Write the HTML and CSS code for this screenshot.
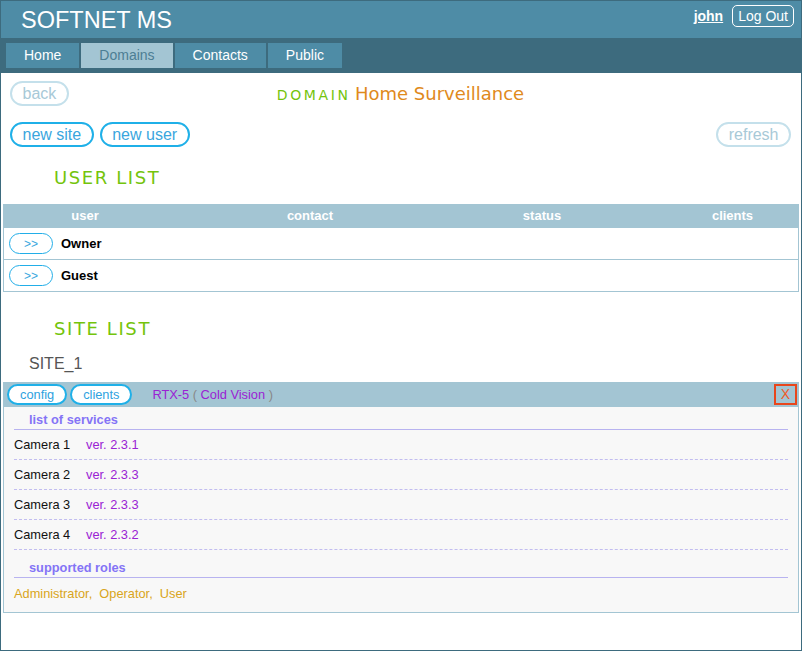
FILE: index.html
```html
<!DOCTYPE html>
<html lang="en">
<head>
<meta charset="utf-8">
<title>SOFTNET MS</title>
<link rel="stylesheet" href="styles.css">
</head>
<body>
<div class="page">
  <header class="topbar">
    <div class="brand">SOFTNET MS</div>
    <div class="account">
      <a class="user-link" href="#">john</a>
      <button class="logout">Log Out</button>
    </div>
  </header>
  <nav class="tabs">
    <div class="tab">Home</div>
    <div class="tab active">Domains</div>
    <div class="tab">Contacts</div>
    <div class="tab">Public</div>
  </nav>
  <main class="content">
    <div class="title-row">
      <div class="title-left"><button class="pill disabled">back</button></div>
      <div class="domain-title"><span class="domain-label">DOMAIN</span> <span class="domain-name">Home Surveillance</span></div>
      <div class="title-right"></div>
    </div>
    <div class="action-row">
      <div class="action-group">
        <button class="pill">new site</button>
        <button class="pill">new user</button>
      </div>
      <button class="pill disabled">refresh</button>
    </div>

    <h2 class="section-title">USER LIST</h2>
    <div class="user-table">
      <div class="user-head">
        <div class="col">user</div>
        <div class="col">contact</div>
        <div class="col">status</div>
        <div class="col col-clients">clients</div>
      </div>
      <div class="user-row">
        <button class="open-btn">&gt;&gt;</button><span class="user-name">Owner</span>
      </div>
      <div class="user-row">
        <button class="open-btn">&gt;&gt;</button><span class="user-name">Guest</span>
      </div>
    </div>

    <h2 class="section-title site-list-title">SITE LIST</h2>
    <div class="site-name">SITE_1</div>
    <div class="site-box">
      <div class="site-head">
        <button class="mini-btn">config</button>
        <button class="mini-btn">clients</button>
        <span class="device"><span class="purple">RTX-5</span> <span class="paren">(</span> <span class="purple">Cold Vision</span> <span class="paren">)</span></span>
        <button class="close-btn">X</button>
      </div>
      <div class="site-body">
        <div class="sub-head">list of services</div>
        <div class="service"><span class="service-name">Camera 1</span><span class="purple">ver. 2.3.1</span></div>
        <div class="service"><span class="service-name">Camera 2</span><span class="purple">ver. 2.3.3</span></div>
        <div class="service"><span class="service-name">Camera 3</span><span class="purple">ver. 2.3.3</span></div>
        <div class="service"><span class="service-name">Camera 4</span><span class="purple">ver. 2.3.2</span></div>
        <div class="sub-head roles-head">supported roles</div>
        <div class="roles">Administrator,&nbsp; Operator,&nbsp; User</div>
      </div>
    </div>
  </main>
</div>
</body>
</html>
```

FILE: styles.css
```css
* { box-sizing: border-box; }
html, body { margin: 0; padding: 0; background: #fff; }
body { font-family: "Liberation Sans", Arial, sans-serif; }

.page {
  width: 802px;
  height: 651px;
  border: 1px solid #3d6b7e;
  display: flex;
  flex-direction: column;
  overflow: hidden;
  background: #fff;
}

/* top bar */
.topbar {
  height: 37px;
  flex: none;
  background: #4e8ca6;
  display: flex;
  justify-content: space-between;
  align-items: flex-start;
  padding: 0 7px 0 20px;
}
.brand {
  font-size: 23.5px;
  line-height: 26px;
  color: #fff;
  margin-top: 6px;
}
.account {
  display: flex;
  align-items: baseline;
  gap: 9px;
  margin-top: 4px;
}
.user-link {
  color: #fff;
  font-weight: bold;
  font-size: 14px;
  text-decoration: underline;
}
.logout {
  height: 22px;
  border: 1px solid #fff;
  border-radius: 5px;
  background: transparent;
  color: #fff;
  font-family: "Liberation Sans", Arial, sans-serif;
  font-size: 14px;
  line-height: 20px;
  padding: 0 5px;
}

/* tabs */
.tabs {
  height: 35px;
  flex: none;
  background: #3d6b7e;
  display: flex;
  gap: 2px;
  padding: 5px 0 5px 5px;
}
.tab {
  height: 25px;
  line-height: 25px;
  padding: 0 18px;
  background: #4e8ca6;
  color: #fff;
  font-size: 14px;
}
.tab.active {
  background: #a3c5d3;
  color: #4c7e94;
}

/* content */
.content { flex: 1; }

.title-row {
  display: grid;
  grid-template-columns: 1fr auto 1fr;
  align-items: center;
  margin-top: 8px;
  padding: 0 10px 0 9px;
}
.domain-title { white-space: nowrap; }
.domain-label {
  font-family: "DejaVu Sans", Verdana, sans-serif;
  font-size: 14px;
  letter-spacing: 2.6px;
  color: #74c40c;
}
.domain-name {
  font-family: "DejaVu Sans", Verdana, sans-serif;
  font-size: 18px;
  color: #e08a1c;
}

.pill {
  height: 25px;
  border: 2px solid #1fb0e8;
  border-radius: 13px;
  background: #fff;
  color: #3aa6de;
  font-family: "Liberation Sans", Arial, sans-serif;
  font-size: 16px;
  line-height: 21px;
  padding: 0 10.5px;
}
.pill.disabled {
  border-color: #c4e0eb;
  color: #a8c9d7;
}

.action-row {
  display: flex;
  justify-content: space-between;
  margin-top: 16px;
  padding: 0 10px 0 9px;
}
.action-group { display: flex; gap: 6px; }

.section-title {
  font-family: "DejaVu Sans", Verdana, sans-serif;
  font-weight: normal;
  font-size: 18px;
  line-height: 21px;
  letter-spacing: 1.6px;
  color: #74c40c;
  margin: 20px 0 16px 53px;
}
.site-list-title { margin: 26px 0 16px 53px; }

/* user table */
.user-table {
  margin: 0 2px;
  border: 1px solid #a3c5d3;
}
.user-head {
  display: grid;
  grid-template-columns: 162px 288px 176px 1fr;
  height: 23px;
  background: #a3c5d3;
  color: #fff;
  font-weight: bold;
  font-size: 13px;
  line-height: 22px;
  text-align: center;
}
.col-clients { padding-left: 37px; }
.user-row {
  height: 31px;
  display: flex;
  align-items: center;
  padding-left: 5px;
  gap: 8px;
}
.user-row + .user-row { border-top: 1px solid #a3c5d3; height: 32px; }
.open-btn {
  width: 44px;
  height: 21px;
  border: 1px solid #22aee8;
  border-radius: 11px;
  background: #fff;
  color: #3aa6de;
  font-family: "Liberation Sans", Arial, sans-serif;
  font-size: 12px;
  padding: 0;
}
.user-name {
  font-weight: bold;
  font-size: 13px;
  color: #000;
}

/* site */
.site-name {
  font-size: 16px;
  line-height: 18px;
  color: #555;
  padding-left: 28px;
  margin-bottom: 9px;
}
.site-box {
  margin: 0 2px;
  border: 1px solid #a3c5d3;
  border-top: none;
}
.site-head {
  height: 25px;
  background: #a3c5d3;
  display: flex;
  align-items: center;
  gap: 3px;
  padding: 0 1px 0 3px;
}
.mini-btn {
  height: 21px;
  border: 2px solid #1fb0e8;
  border-radius: 11px;
  background: #fff;
  color: #2ea2e0;
  font-family: "Liberation Sans", Arial, sans-serif;
  font-size: 12.8px;
  line-height: 17px;
  padding: 0 11px;
}
.device {
  margin-left: 17px;
  font-size: 12.8px;
  flex: 1;
}
.purple { color: #9a22d4; }
.paren { color: #888; }
.close-btn {
  width: 23px;
  height: 21px;
  border: 2px solid #e8461c;
  background: transparent;
  color: #f05a28;
  font-family: "Liberation Sans", Arial, sans-serif;
  font-size: 14px;
  line-height: 17px;
  padding: 0;
}
.site-body {
  background: #f8f8f8;
  padding: 0 10px;
}
.sub-head {
  font-weight: bold;
  font-size: 12.8px;
  line-height: 15px;
  color: #8474f6;
  padding: 5px 0 2px 15px;
  border-bottom: 1px solid #b8b3f0;
}
.roles-head { margin-top: 5px; }
.service {
  height: 30px;
  line-height: 29px;
  font-size: 12.8px;
  color: #111;
  border-bottom: 1px dashed #c2bdf0;
}
.service-name {
  display: inline-block;
  width: 72px;
}
.roles {
  height: 34px;
  padding-top: 8px;
  font-size: 12.8px;
  line-height: 15px;
  color: #d9a520;
}
```
